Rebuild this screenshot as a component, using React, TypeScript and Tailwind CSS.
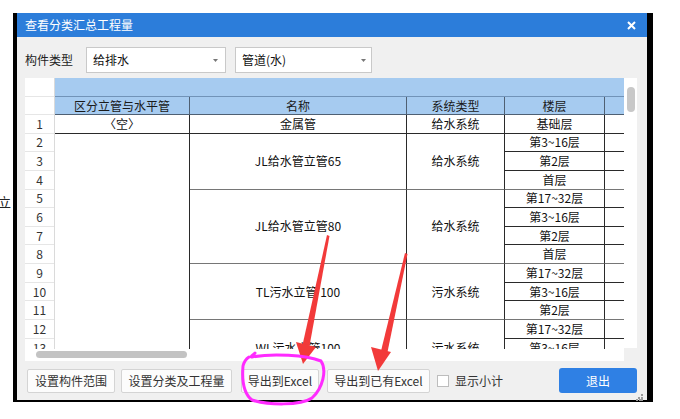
import React from 'react';

const FONT = "[font-family:'Noto_Sans_CJK_SC','Noto_Sans',sans-serif]";

type CellProps = { cls: string; children?: React.ReactNode };
function Cell({ cls, children }: CellProps) {
  return (
    <div className={'shrink-0 flex items-center justify-center text-[12px] leading-none text-[#111] whitespace-nowrap ' + cls}>
      {children}
    </div>
  );
}

function HeaderTop() {
  return <div className="h-[19px] shrink-0 bg-[#a6cbf0] border-b border-[#7193b8]" />;
}
function HeaderLabel({ children, last }: { children?: React.ReactNode; last?: boolean }) {
  return (
    <div
      className={
        'h-[18px] shrink-0 bg-[#a6cbf0] border-b border-[#4f6073] flex items-center justify-center text-[12px] leading-none text-[#1a1a1a] ' +
        (last ? '' : 'border-r')
      }
    >
      {children}
    </div>
  );
}

const floors: { t: string; end: boolean }[] = [
  { t: '基础层', end: false },
  { t: '第3~16层', end: false },
  { t: '第2层', end: false },
  { t: '首层', end: true },
  { t: '第17~32层', end: false },
  { t: '第3~16层', end: false },
  { t: '第2层', end: false },
  { t: '首层', end: true },
  { t: '第17~32层', end: false },
  { t: '第3~16层', end: false },
  { t: '第2层', end: true },
  { t: '第17~32层', end: false },
  { t: '第3~16层', end: false },
  { t: '第2层', end: true },
];

export default function App() {
  return (
    <div className={'relative w-[680px] h-[419px] bg-white overflow-hidden ' + FONT}>
      <div className="absolute left-[-2px] top-[195px] text-[13px] leading-none text-[#222]">立</div>

      <div className="ml-[13px] mt-[13px] w-[640px] h-[389px] bg-black pl-[4px] pr-[6px] pb-[2px]">
        <div className="w-[630px] h-[387px] bg-[#f0f0f0] flex flex-col">
          {/* title bar */}
          <div className="h-[24px] shrink-0 bg-[#2c7dda] flex items-center justify-between pl-[8px] pr-[11px]">
            <span className="text-white text-[12px] leading-none">查看分类汇总工程量</span>
            <svg width="9" height="9" viewBox="0 0 9 9">
              <path d="M1 1 L8 8 M8 1 L1 8" stroke="white" strokeWidth="2" />
            </svg>
          </div>

          {/* controls */}
          <div className="flex items-center pl-[8px] pt-[10px] h-[36px] shrink-0">
            <span className="text-[12px] leading-none text-[#222] w-[61px]">构件类型</span>
            <div className="w-[140px] h-[26px] bg-white border border-[#c9c9c9] flex items-center justify-between pl-[6px] pr-[7px]">
              <span className="text-[12px] leading-none text-[#111]">给排水</span>
              <svg width="5" height="3" viewBox="0 0 5 3">
                <path d="M0 0 H5 L2.5 3 Z" fill="#777" />
              </svg>
            </div>
            <div className="ml-[9px] w-[137px] h-[26px] bg-white border border-[#c9c9c9] flex items-center justify-between pl-[6px] pr-[5px]">
              <span className="text-[12px] leading-none text-[#111]">管道(水)</span>
              <svg width="5" height="3" viewBox="0 0 5 3">
                <path d="M0 0 H5 L2.5 3 Z" fill="#777" />
              </svg>
            </div>
          </div>

          {/* table */}
          <div className="mt-[5px] ml-[8px] flex h-[283px] shrink-0">
            <div className="w-[599px] flex flex-col bg-white">
              <div className="h-[271px] shrink-0 overflow-hidden flex">
                {/* row numbers */}
                <div className="w-[30px] shrink-0 flex flex-col border-r border-[#dadada]">
                  <div className="h-[19px] shrink-0 border-b border-[#e6e6e6]" />
                  <div className="h-[18px] shrink-0 border-b border-[#e6e6e6]" />
                  {floors.map((_, i) => (
                    <Cell key={i} cls="h-[18.65px] border-b border-[#e6e6e6] text-[#333]">
                      {i + 1}
                    </Cell>
                  ))}
                </div>
                {/* col1 */}
                <div className="w-[135px] shrink-0 flex flex-col">
                  <HeaderTop />
                  <HeaderLabel>区分立管与水平管</HeaderLabel>
                  <Cell cls="h-[18.65px] border-b border-r border-[#2a2a2a]">〈空〉</Cell>
                  <Cell cls="h-[242.45px] border-r border-[#2a2a2a]" />
                </div>
                {/* col2 */}
                <div className="w-[217px] shrink-0 flex flex-col">
                  <HeaderTop />
                  <HeaderLabel>名称</HeaderLabel>
                  <Cell cls="h-[18.65px] border-b border-r border-[#2a2a2a]">金属管</Cell>
                  <Cell cls="h-[55.95px] border-r border-r-[#2a2a2a] border-b border-b-[#767676]">JL给水管立管65</Cell>
                  <Cell cls="h-[74.6px] border-r border-r-[#2a2a2a] border-b border-b-[#767676]">JL给水管立管80</Cell>
                  <Cell cls="h-[55.95px] border-r border-r-[#2a2a2a] border-b border-b-[#767676]">TL污水立管 100</Cell>
                  <Cell cls="h-[55.95px] border-r border-r-[#2a2a2a] border-b border-b-[#767676]">WL污水立管100</Cell>
                </div>
                {/* col3 */}
                <div className="w-[98px] shrink-0 flex flex-col">
                  <HeaderTop />
                  <HeaderLabel>系统类型</HeaderLabel>
                  <Cell cls="h-[18.65px] border-b border-r border-[#2a2a2a]">给水系统</Cell>
                  <Cell cls="h-[55.95px] border-r border-r-[#2a2a2a] border-b border-b-[#767676]">给水系统</Cell>
                  <Cell cls="h-[74.6px] border-r border-r-[#2a2a2a] border-b border-b-[#767676]">给水系统</Cell>
                  <Cell cls="h-[55.95px] border-r border-r-[#2a2a2a] border-b border-b-[#767676]">污水系统</Cell>
                  <Cell cls="h-[55.95px] border-r border-r-[#2a2a2a] border-b border-b-[#767676]">污水系统</Cell>
                </div>
                {/* col4 */}
                <div className="w-[100px] shrink-0 flex flex-col">
                  <HeaderTop />
                  <HeaderLabel>楼层</HeaderLabel>
                  {floors.map((f, i) => (
                    <Cell
                      key={i}
                      cls={
                        'h-[18.65px] border-r border-r-[#2a2a2a] border-b ' +
                        (f.end ? 'border-b-[#767676]' : 'border-b-[#2a2a2a]')
                      }
                    >
                      {f.t}
                    </Cell>
                  ))}
                </div>
                {/* col5 */}
                <div className="w-[40px] shrink-0 flex flex-col">
                  <HeaderTop />
                  <HeaderLabel last />
                  {floors.map((f, i) => (
                    <div
                      key={i}
                      className={
                        'h-[18.65px] shrink-0 border-b ' + (f.end ? 'border-b-[#767676]' : 'border-b-[#2a2a2a]')
                      }
                    />
                  ))}
                </div>
              </div>
              {/* horizontal scrollbar */}
              <div className="h-[12px] shrink-0 pl-[11px] pt-[2px]">
                <div className="w-[151px] h-[7px] rounded-full bg-[#c3c3c3]" />
              </div>
            </div>
            {/* vertical scrollbar */}
            <div className="w-[13px] h-[270px] bg-white pl-[3px] pt-[9px]">
              <div className="w-[8px] h-[25px] rounded-full bg-[#c8c8c8]" />
            </div>
          </div>

          {/* buttons */}
          <div className="mt-[7px] flex items-center pl-[10px] h-[25px] shrink-0">
            <div className="w-[88px] h-[24px] bg-[#fcfcfc] border border-[#d4d4d4] rounded-[2px] flex items-center justify-center text-[12px] leading-none text-[#333]">
              设置构件范围
            </div>
            <div className="ml-[6px] w-[111px] h-[24px] bg-[#fcfcfc] border border-[#d4d4d4] rounded-[2px] flex items-center justify-center text-[12px] leading-none text-[#333]">
              设置分类及工程量
            </div>
            <div className="ml-[9px] w-[78px] h-[24px] bg-[#fcfcfc] border border-[#d4d4d4] rounded-[2px] flex items-center justify-center text-[12px] leading-none text-[#333]">
              导出到Excel
            </div>
            <div className="ml-[8px] w-[103px] h-[24px] bg-[#fcfcfc] border border-[#d4d4d4] rounded-[2px] flex items-center justify-center text-[12px] leading-none text-[#333]">
              导出到已有Excel
            </div>
            <div className="ml-[7px] w-[12px] h-[12px] bg-white border border-[#bdbdbd]" />
            <span className="ml-[6px] text-[12px] leading-none text-[#333]">显示小计</span>
            <div className="ml-auto mr-[10px] w-[78px] h-[25px] bg-[#2f80e4] rounded-[3px] flex items-center justify-center text-[12px] leading-none text-white">
              退出
            </div>
          </div>
          <div className="flex justify-end pr-[4px] mt-[1px]">
            <svg width="7" height="7" viewBox="0 0 7 7">
              <rect x="5" y="0" width="2" height="2" fill="#9a9a9a" />
              <rect x="2" y="3" width="2" height="2" fill="#9a9a9a" />
              <rect x="5" y="3" width="2" height="2" fill="#9a9a9a" />
              <rect x="0" y="5" width="2" height="2" fill="#9a9a9a" />
              <rect x="3" y="5" width="2" height="2" fill="#9a9a9a" />
              <rect x="5" y="5" width="2" height="2" fill="#9a9a9a" />
            </svg>
          </div>
        </div>
      </div>

      {/* annotations */}
      <svg className="absolute left-0 top-0 pointer-events-none" width="680" height="419" viewBox="0 0 680 419">
        <polygon points="327,235 329.5,236 309.5,346 302.5,345" fill="#f23a3a" />
        <polygon points="296,342 316,347 303,364" fill="#f23a3a" />
        <polygon points="405,253 407.5,254 387.5,352 381,351" fill="#f23a3a" />
        <polygon points="371,347 391,352 378,371" fill="#f23a3a" />
        <path
          d="M255 353 C252 356 250 357 252 357 C272 353 306 355 321 361 C327 370 323 388 312 398 C300 406 268 405 252 400 C243 393 242 378 243 366 C244 362 246 359 249 357"
          fill="none"
          stroke="#ff2bff"
          strokeWidth="3"
          strokeLinecap="round"
        />
      </svg>
    </div>
  );
}
